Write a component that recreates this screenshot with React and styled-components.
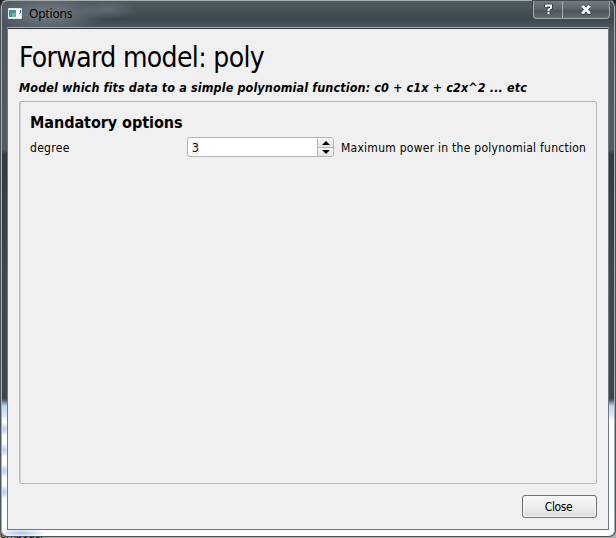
import React from 'react';
import styled, { createGlobalStyle } from 'styled-components';

const Global = createGlobalStyle`
  * { box-sizing: border-box; }
  body { margin: 0; background: #fff; overflow: hidden; }
`;

const UI_FONT = '"DejaVu Sans Condensed", "DejaVu Sans", sans-serif';

const Desktop = styled.div`
  position: relative;
  width: 616px;
  height: 538px;
  overflow: hidden;
  background: linear-gradient(#20242a 0 400px, #b0b0b0 412px);
  font-family: ${UI_FONT};
  font-stretch: condensed;
  color: #000;
`;

const Behind = styled.div`
  position: absolute;
  left: 0;
  top: 527px;
  font: 12px/14px ${UI_FONT};
  font-stretch: condensed;
  letter-spacing: -0.7px;
  white-space: nowrap;
`;

const Window = styled.div`
  position: relative;
  width: 616px;
  height: 537px;
  padding: 0 7px 7px 6px;
  border: 1px solid #4d5256;
  border-top-color: #a7aeb0;
  border-radius: 7px;
  box-shadow: inset 1px 0 #a7b0b5, inset -1px 0 #a7b0b5;
  background:
    radial-gradient(ellipse 60px 17px at 46px 14px, rgba(160, 168, 175, 0.6), transparent),
    radial-gradient(ellipse 28px 9px at 107px 9px, rgba(122, 137, 151, 0.5), transparent),
    radial-gradient(ellipse 26px 4px at 20px 532px, #afc4ee, transparent),
    radial-gradient(ellipse 5px 7px at 3px 428px, #b4c8ee, transparent),
    radial-gradient(ellipse 5px 7px at 3px 449px, #b4c8ee, transparent),
    radial-gradient(ellipse 5px 7px at 3px 470px, #b4c8ee, transparent),
    radial-gradient(ellipse 5px 7px at 3px 491px, #b4c8ee, transparent),
    linear-gradient(
      #525c63 0, #3c474e 18px, #4b5760 28px, #515960 60px, #555a62 149px,
      #343b43 153px, #41474e 300px, #3d444b 398px, #bdd7f7 405px,
      #d9eaff 414px, #fff 421px, #f7ffff 500px, #fff 537px
    );
`;

const TitleBar = styled.header`
  display: flex;
  width: 603px;
  height: 26px;
  padding-left: 1px;
`;

const AppIcon = styled.svg`
  width: 14px;
  height: 11px;
  margin-top: 7px;
`;

const Title = styled.h1`
  margin: 5px auto 0 7px;
  font: 400 12px/16px "Noto Sans", sans-serif;
  letter-spacing: ${p => p.$track};
`;

const Controls = styled.div`
  display: flex;
  width: 77px;
  height: 18px;
  border: 1px solid #a4abae;
  border-top: 0;
  border-radius: 0 0 4px 4px;
  overflow: hidden;
  background: linear-gradient(#747b81, #5d656c 8px, #4d565e 10px, #626a70);
  box-shadow: 0 0 0 1px #414950;
`;

const ControlButton = styled.button`
  width: ${p => p.$width};
  padding: 0;
  border: 0;
  border-left: ${p => (p.$divided ? '1px solid #a4abae' : '0')};
  background: transparent;
  display: flex;
  justify-content: center;
  svg { width: 13px; height: 14px; margin-top: 1px; }
`;

const Client = styled.main`
  display: flex;
  flex-direction: column;
  width: 602px;
  height: 503px;
  padding: 14px 11px 11px 11px;
  border: 1px solid #73777b;
  border-top: 1px solid #a9afb1;
  background: #f0f0f0;
  box-shadow: inset 0 1px #2d333b;
`;

const Heading = styled.h2`
  margin: 0;
  height: 37px;
  font-size: 28px;
  font-weight: 400;
  line-height: 32px;
  white-space: nowrap;
  letter-spacing: ${p => p.$track};
`;

const Description = styled.p`
  margin: 0;
  height: 22px;
  font-size: 12.5px;
  font-weight: 700;
  font-style: italic;
  line-height: 18px;
  white-space: nowrap;
  letter-spacing: ${p => p.$track};
`;

const Group = styled.section`
  width: 578px;
  height: 383px;
  flex: none;
  padding: 11px 9px;
  border: 1px solid #b9b9b9;
  border-radius: 2px;
  box-shadow: inset 1px 0 #d0d0d0;
`;

const GroupTitle = styled.h3`
  margin: 0 0 4px 1px;
  font-size: 16px;
  line-height: 20px;
  white-space: nowrap;
  letter-spacing: ${p => p.$track};
`;

const OptionRow = styled.div`
  display: grid;
  grid-template-columns: 157px 147px 1fr;
  align-items: center;
  height: 20px;
  padding-left: 1px;
`;

const Label = styled.label`
  padding: 2px 0 0 ${p => p.$inset || 0};
  font-size: 12px;
  line-height: 16px;
  white-space: nowrap;
  letter-spacing: ${p => p.$track};
`;

const SpinBox = styled.div`
  display: flex;
  height: 20px;
  border: 1px solid #b4b4b4;
  border-radius: 3px;
  overflow: hidden;
  background: #fff;
`;

const SpinValue = styled.div`
  flex: 1;
  padding: 3px 0 0 4px;
  font-size: 12px;
  line-height: 14px;
  span { background: #f0f0f0; }
`;

const Stepper = styled.div`
  width: 16px;
  display: grid;
  grid-template-rows: 9px 9px;
  border-left: 1px solid #b4b4b4;
`;

const Step = styled.button`
  display: flex;
  align-items: center;
  justify-content: center;
  padding: 0;
  border: 0;
  border-top: ${p => (p.$lower ? '1px solid #b4b4b4' : '0')};
  background: linear-gradient(#f9f9f9, #e4e4e4);
  svg { width: 8px; height: 4px; }
`;

const Footer = styled.footer`
  display: flex;
  justify-content: flex-end;
  margin-top: 11px;
`;

const CloseButton = styled.button`
  width: 75px;
  height: 23px;
  padding: 1px 2px 0 0;
  border: 1px solid #707070;
  border-radius: 3px;
  background: linear-gradient(#f8f8f8, #eee 50%, #dddddd);
  box-shadow: inset 0 0 0 1px #f8f8f8;
  font: 12px/20px ${UI_FONT};
  font-stretch: condensed;
  letter-spacing: ${p => p.$track};
  color: #000;
`;

export default function App() {
  return (
    <>
      <Global />
      <Desktop>
        <Behind>ombodel</Behind>
        <Window>
          <TitleBar>
            <AppIcon viewBox="0 0 14 11">
              <path fill="#f6fafb" stroke="#dce2e5" d="M.5.5h13v10H.5z" />
              <path fill="#4c91a1" d="M1 2h7v7H1z" />
              <path fill="#6cba91" d="M4 5h4v4H4z" />
              <path fill="#3c5e9b" d="M12 2h1v3h-1z" />
              <path fill="#6dcbb1" d="M11 5h1v1h-1z" />
            </AppIcon>
            <Title $track="-0.2px">Options</Title>
            <Controls>
              <ControlButton $width="28px" aria-label="Help">
                <svg viewBox="0 0 13 14">
                  <path d="M4 5V3.5h5V6L6.5 7.5V9M6.5 10v2" fill="none" stroke="#2d3238" strokeWidth="3.4" />
                  <path d="M4 5V3.5h5V6L6.5 7.5V9M6.5 10v2" fill="none" stroke="#fff" strokeWidth="2" />
                </svg>
              </ControlButton>
              <ControlButton $width="47px" $divided aria-label="Close window">
                <svg viewBox="0 0 13 14">
                  <path d="M2.5 4l7 7M9.5 4l-7 7M1.5 4.5h3M7.5 4.5h3M1.5 11h3M7.5 11h3" stroke="#30363d" strokeWidth="3.6" />
                  <path d="M2.5 4l7 7M9.5 4l-7 7" stroke="#f7f7f7" strokeWidth="2.7" />
                  <path d="M1.5 4.5h3M7.5 4.5h3M1.5 11h3M7.5 11h3" stroke="#f7f7f7" strokeWidth="1.4" />
                </svg>
              </ControlButton>
            </Controls>
          </TitleBar>
          <Client>
            <Heading $track="-0.65px">Forward model: poly</Heading>
            <Description $track="0.11px">
              Model which fits data to a simple polynomial function: c0 + c1x + c2x^2 ... etc
            </Description>
            <Group>
              <GroupTitle $track="-0.05px">Mandatory options</GroupTitle>
              <OptionRow>
                <Label $track="0.3px">degree</Label>
                <SpinBox>
                  <SpinValue><span>3</span></SpinValue>
                  <Stepper>
                    <Step aria-label="Increase">
                      <svg viewBox="0 0 8 4"><path d="M4 0L8 4H0z" /></svg>
                    </Step>
                    <Step $lower aria-label="Decrease">
                      <svg viewBox="0 0 8 4"><path d="M0 0h8L4 4z" /></svg>
                    </Step>
                  </Stepper>
                </SpinBox>
                <Label $track="0.26px" $inset="7px">Maximum power in the polynomial function</Label>
              </OptionRow>
            </Group>
            <Footer><CloseButton $track="-0.4px">Close</CloseButton></Footer>
          </Client>
        </Window>
      </Desktop>
    </>
  );
}
